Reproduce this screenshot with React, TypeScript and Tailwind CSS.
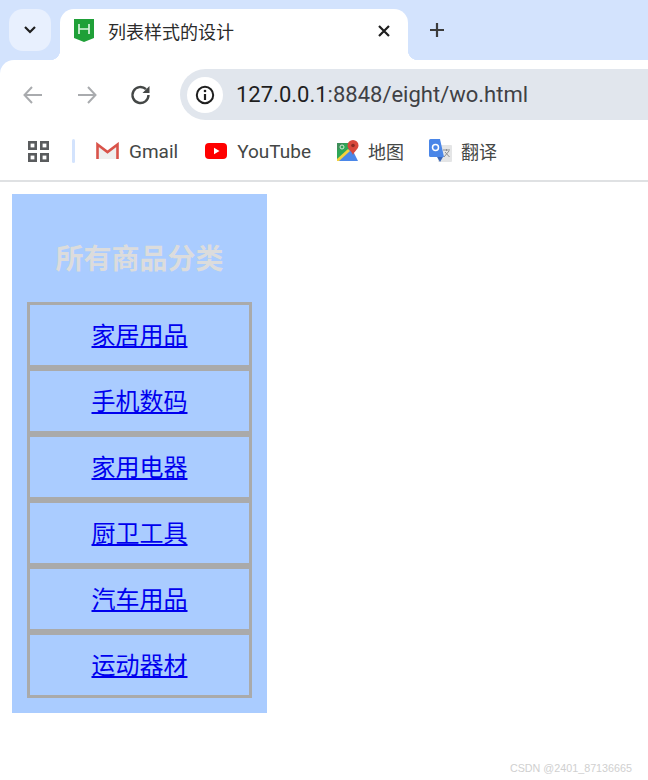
const items = ["家居用品", "手机数码", "家用电器", "厨卫工具", "汽车用品", "运动器材"];

const cjk = "font-['Noto_Sans_CJK_SC','Liberation_Sans',sans-serif]";

function Favicon() {
  return (
    <svg width="20" height="24" viewBox="0 0 20 24" className="shrink-0">
      <path d="M0 0H20V19L10 23L0 19Z" fill="#1fa038" />
      <path d="M5 5V15M15 5V15M5 10H15" stroke="#d9f3dd" strokeWidth="1.7" fill="none" />
    </svg>
  );
}

function TabBar() {
  return (
    <div className="flex h-[60px] bg-[#d3e3fd] pt-[9px] pl-[9px]">
      <div className="flex h-[42px] w-[42px] items-center justify-center rounded-[14px] bg-[#e8f0fe]">
        <svg width="14" height="10" viewBox="0 0 14 10">
          <path d="M2 2L7 7L12 2" stroke="#1f1f1f" strokeWidth="2.2" fill="none" />
        </svg>
      </div>
      {/* active tab */}
      <div className="relative ml-[9px] flex h-[51px] w-[348px] items-center rounded-t-[14px] bg-white pb-2 pl-[14px]">
        <span className="absolute bottom-0 left-[-10px] h-[10px] w-[10px] bg-[radial-gradient(circle_at_0_0,#d3e3fd_10px,white_10.5px)]" />
        <span className="absolute bottom-0 right-[-10px] h-[10px] w-[10px] bg-[radial-gradient(circle_at_100%_0,#d3e3fd_10px,white_10.5px)]" />
        <Favicon />
        <span className={`ml-[14px] text-[18px] leading-none text-[#2b2b2b] ${cjk}`}>列表样式的设计</span>
        <svg width="14" height="14" viewBox="0 0 14 14" className="ml-[143px]">
          <path d="M2 2L12 12M12 2L2 12" stroke="#1f1f1f" strokeWidth="2.2" />
        </svg>
      </div>
      <div className="ml-[21px] flex h-[42px] items-center">
        <svg width="16" height="16" viewBox="0 0 16 16">
          <path d="M8 1V15M1 8H15" stroke="#3c3c3c" strokeWidth="2.2" />
        </svg>
      </div>
    </div>
  );
}

function Toolbar() {
  return (
    <div className="flex h-[70px] items-center rounded-tl-[14px] bg-white pb-[10px] pl-[22px] pt-[9px]">
      <svg width="22" height="20" viewBox="0 0 22 20">
        <path d="M20 10H3M10 2L2.500 10L10 18" stroke="#a9abae" strokeWidth="2" fill="none" />
      </svg>
      <svg width="22" height="20" viewBox="0 0 22 20" className="ml-[32px]">
        <path d="M2 10H19M12 2L19.500 10L12 18" stroke="#a9abae" strokeWidth="2" fill="none" />
      </svg>
      <svg width="24" height="24" viewBox="0 0 24 24" className="ml-[31px]">
        <path d="M19.500 12A8 8 0 1 1 17 6.200" stroke="#444746" strokeWidth="2.400" fill="none" />
        <path d="M20.500 3V10H13.500Z" fill="#444746" />
      </svg>
      <div className="ml-[27px] flex h-[51px] flex-1 items-center rounded-l-full bg-[#e1e6ed] pl-[7px]">
        <div className="flex h-9 w-9 items-center justify-center rounded-full bg-white">
          <svg width="20" height="20" viewBox="0 0 20 20">
            <circle cx="10" cy="10" r="8.200" stroke="#1f1f1f" strokeWidth="2" fill="none" />
            <path d="M10 9V15" stroke="#1f1f1f" strokeWidth="2.200" />
            <circle cx="10" cy="6" r="1.300" fill="#1f1f1f" />
          </svg>
        </div>
        <span className="ml-[13px] font-['Roboto',sans-serif] text-[22px] leading-none text-[#1f1f1f]">
          127.0.0.1<span className="text-[#3f4145]">:8848/eight/wo.html</span>
        </span>
      </div>
    </div>
  );
}

function Bookmark({ icon, label, gap, cn }: { icon: React.ReactNode; label: string; gap: string; cn?: boolean }) {
  return (
    <div className="flex items-center">
      {icon}
      <span className={`${gap} leading-none text-[#444746] ${cn ? `text-[18px] ${cjk}` : "text-[19px] font-['Roboto',sans-serif]"}`}>{label}</span>
    </div>
  );
}

function BookmarksBar() {
  return (
    <div className="flex h-[52px] items-center border-b-2 border-[#dfe1e3] bg-white pb-2 pl-[28px]">
      <svg width="21" height="21" viewBox="0 0 21 21">
        <g stroke="#5a5c5e" strokeWidth="2.600" fill="none">
          <rect x="1.300" y="1.300" width="6.400" height="6.400" />
          <rect x="13.300" y="1.300" width="6.400" height="6.400" />
          <rect x="1.300" y="13.300" width="6.400" height="6.400" />
          <rect x="13.300" y="13.300" width="6.400" height="6.400" />
        </g>
      </svg>
      <div className="ml-[23px] h-[24px] w-[3px] rounded-sm bg-[#d3e3fd]" />
      <div className="ml-[21px] flex items-center">
        <Bookmark
          gap="ml-[10px]"
          label="Gmail"
          icon={
            <svg width="23" height="18" viewBox="0 0 23 18">
              <path d="M2 17V3L11.500 10L21 3V17" fill="#efefef" />
              <path d="M1.500 17V2.500L11.500 10L21.500 2.500V17" stroke="#d9534a" strokeWidth="2.600" fill="none" />
            </svg>
          }
        />
        <div className="ml-[27px]">
          <Bookmark
            gap="ml-[10px]"
            label="YouTube"
            icon={
              <svg width="22" height="16" viewBox="0 0 22 16">
                <rect width="22" height="16" rx="4" fill="#ff0000" />
                <path d="M9 4.800V11.200L14.500 8Z" fill="white" />
              </svg>
            }
          />
        </div>
        <div className="ml-[26px]">
          <Bookmark
            gap="ml-[9px]"
            label="地图"
            cn
            icon={
              <svg width="22" height="22" viewBox="0 0 22 22">
                <path d="M0 3H14V21H0Z" fill="#2fa757" />
                <path d="M0 21L14 7L21 21Z" fill="#4b87e8" />
                <path d="M0 19L11 9L13 11L2 21H0Z" fill="#f6d23c" />
                <path d="M0 3H8L0 11Z" fill="#3f8f5a" />
                <circle cx="5" cy="7" r="2" fill="none" stroke="#d5ecd9" strokeWidth="1" />
                <path d="M16 0A5.500 5.500 0 0 1 21.500 5.500C21.500 9 17.500 11 16 15C14.500 11 10.500 9 10.500 5.500A5.500 5.500 0 0 1 16 0Z" fill="#d9483b" />
                <circle cx="16" cy="5.500" r="1.800" fill="#8c2a22" />
              </svg>
            }
          />
        </div>
        <div className="ml-[25px]">
          <Bookmark
            gap="ml-[9px]"
            label="翻译"
            cn
            icon={
              <svg width="23" height="24" viewBox="0 0 23 24">
                <rect x="9" y="6" width="14" height="17" rx="1" fill="#e4e5e6" />
                <path d="M1.500 0H11L15 18H1.500A1.500 1.500 0 0 1 0 16.500V1.500A1.500 1.500 0 0 1 1.500 0Z" fill="#4a86e8" />
                <path d="M8 18H14L11 23Z" fill="#3a66b8" />
                <circle cx="6.500" cy="8.500" r="3" fill="none" stroke="white" strokeWidth="1.500" />
                <path d="M14 11H21M17.500 10V12M15 18L20 12M16 13L20.500 18" stroke="#8b8d90" strokeWidth="1" fill="none" />
              </svg>
            }
          />
        </div>
      </div>
    </div>
  );
}

export default function App() {
  return (
    <div className={`relative h-[780px] w-[648px] overflow-hidden bg-white ${cjk}`}>
      <div className="bg-[#d3e3fd]">
        <TabBar />
        <Toolbar />
      </div>
      <BookmarksBar />

      {/* page content */}
      <div className="pl-3 pt-3">
        <div className="w-[255px] bg-[#aaccff] px-[15px] pb-[15px]">
          <h3 className="flex h-[108px] items-center justify-center pt-[17px] text-[28px] font-bold text-[#dcdcdc]">
            所有商品分类
          </h3>
          <ul>
            {items.map((item) => (
              <li key={item} className="flex h-[66px] items-center justify-center border-[3px] border-[#aaaaaa] pb-[2px]">
                <a href="#" className="text-[24px] leading-none text-[#0000ee] underline">
                  {item}
                </a>
              </li>
            ))}
          </ul>
        </div>
      </div>

      <span className="absolute bottom-[6px] right-[16px] font-['Liberation_Sans',sans-serif] text-[10.75px] leading-none text-[#d0d0d0]">
        CSDN @2401_87136665
      </span>
    </div>
  );
}
